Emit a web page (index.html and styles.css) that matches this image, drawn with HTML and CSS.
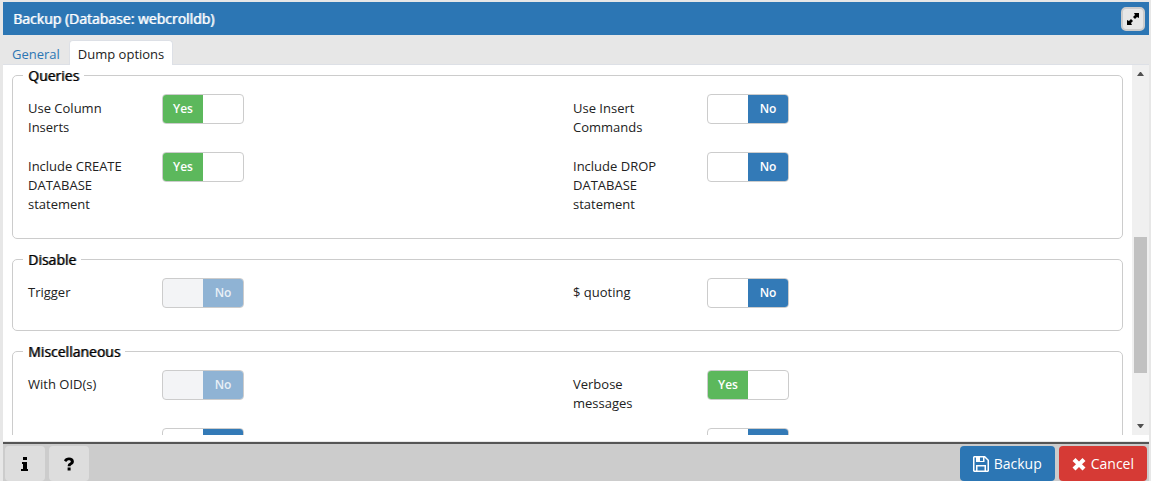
FILE: index.html
```
<!DOCTYPE html>
<html lang="en">
<head>
    <meta charset="UTF-8">
    <meta name="viewport" content="width=device-width, initial-scale=1.0">
    <title>Backup (Database: webcrolldb)</title>
    <link rel="stylesheet" href="styles.css">
</head>
<body>
    <div class="dialog">
        <header class="dialog-header">
            <h1>Backup (Database: webcrolldb)</h1>
            <button type="button" class="maximize" aria-label="Maximize">
                <svg viewBox="0 0 14 14" width="14" height="14"><path d="M8 1h5v5l-2-1-2 2-2-2 2-2zM6 13H1V8l2 1 2-2 2 2-2 2z"/></svg>
            </button>
        </header>
        <nav class="tabs">
            <a href="#general" class="tab">General</a>
            <a href="#dump" class="tab active">Dump options</a>
        </nav>
        <div class="content">
            <form class="options" id="dump">
                <fieldset>
                    <legend>Queries</legend>
                    <div class="row">
                        <div class="field">
                            <label for="columnInserts">Use Column Inserts</label>
                            <span class="toggle"><input type="checkbox" id="columnInserts" checked><span class="on">Yes</span><span class="off">No</span></span>
                        </div>
                        <div class="field">
                            <label for="insertCommands">Use Insert Commands</label>
                            <span class="toggle"><input type="checkbox" id="insertCommands"><span class="on">Yes</span><span class="off">No</span></span>
                        </div>
                    </div>
                    <div class="row">
                        <div class="field">
                            <label for="createDatabase">Include CREATE DATABASE statement</label>
                            <span class="toggle"><input type="checkbox" id="createDatabase" checked><span class="on">Yes</span><span class="off">No</span></span>
                        </div>
                        <div class="field">
                            <label for="dropDatabase">Include DROP DATABASE statement</label>
                            <span class="toggle"><input type="checkbox" id="dropDatabase"><span class="on">Yes</span><span class="off">No</span></span>
                        </div>
                    </div>
                </fieldset>
                <fieldset>
                    <legend>Disable</legend>
                    <div class="row">
                        <div class="field">
                            <label for="trigger">Trigger</label>
                            <span class="toggle"><input type="checkbox" id="trigger" disabled><span class="on">Yes</span><span class="off">No</span></span>
                        </div>
                        <div class="field">
                            <label for="quoting">$ quoting</label>
                            <span class="toggle"><input type="checkbox" id="quoting"><span class="on">Yes</span><span class="off">No</span></span>
                        </div>
                    </div>
                </fieldset>
                <fieldset>
                    <legend>Miscellaneous</legend>
                    <div class="row">
                        <div class="field">
                            <label for="withOids">With OID(s)</label>
                            <span class="toggle"><input type="checkbox" id="withOids" disabled><span class="on">Yes</span><span class="off">No</span></span>
                        </div>
                        <div class="field">
                            <label for="verbose">Verbose messages</label>
                            <span class="toggle"><input type="checkbox" id="verbose" checked><span class="on">Yes</span><span class="off">No</span></span>
                        </div>
                    </div>
                    <div class="row">
                        <div class="field">
                            <label for="forceQuotes"></label>
                            <span class="toggle"><input type="checkbox" id="forceQuotes"><span class="on"></span><span class="off"></span></span>
                        </div>
                        <div class="field">
                            <label for="setSession"></label>
                            <span class="toggle"><input type="checkbox" id="setSession"><span class="on"></span><span class="off"></span></span>
                        </div>
                    </div>
                </fieldset>
            </form>
            <div class="scrollbar" aria-hidden="true">
                <svg viewBox="0 0 17 17" width="17" height="17"><path d="M5 11h7L9 7H8z"/></svg>
                <div class="track"><div class="thumb"></div></div>
                <svg viewBox="0 0 17 17" width="17" height="17"><path d="M5 6h7l-3 4H8z"/></svg>
            </div>
        </div>
        <footer class="dialog-footer">
            <button type="button" class="btn btn-icon" aria-label="Information">
                <svg viewBox="0 0 8 16" width="8" height="16"><path d="M2 1h4v3H2zM1 6h5v7h1v2H0v-2h2V8H1z"/></svg>
            </button>
            <button type="button" class="btn btn-icon" aria-label="Help">
                <svg viewBox="0 0 10 16" width="10" height="16"><path d="M0 4.4C1 2.4 2.700 1.500 5 1.500c2.800 0 4.900 1.600 4.900 3.900 0 1.700-.8 2.500-2.100 3.300-1 .6-1.200.8-1.200 1.600H3.700c0-1.800.5-2.600 1.900-3.400.9-.5 1.200-.8 1.200-1.400 0-.8-.8-1.300-1.900-1.300-1.200 0-1.900.5-2.700 1.700zM3.600 11.500h3v3h-3z"/></svg>
            </button>
            <span class="spacer"></span>
            <button type="button" class="btn btn-primary">
                <svg viewBox="0 0 16 16" width="16" height="16"><path fill-rule="evenodd" d="M1 0h11l4 4v11l-1 1H1l-1-1V1zM1.500 1.500v13H3V9h10v5.500h1.500v-10L11.500 1.500V6H3V1.500zM7 1.500V5h3V1.500zM4.500 10.500v4h7v-4z"/></svg>
                Backup
            </button>
            <button type="button" class="btn btn-danger">
                <svg viewBox="0 0 14 14" width="14" height="14"><path d="M3.500 1 7 4.500 10.500 1 13.500 4 10 7.200l3.500 3.300-3 3L7 10l-3.500 3.500-3-3L4 7.200.5 4z"/></svg>
                Cancel
            </button>
        </footer>
    </div>
</body>
</html>
```
FILE: styles.css
```
* {
    box-sizing: border-box;
}
body {
    font-family: "Open Sans", "Noto Sans", sans-serif;
    font-size: 13px;
    line-height: 19px;
    color: #222;
    margin: 0;
    background-color: #e7e7e7;
}
svg {
    display: block;
    fill: currentColor;
}
.dialog {
    display: flex;
    flex-direction: column;
    height: 100vh;
    padding: 2px 2px 0 3px;
}
.dialog-header {
    display: flex;
    align-items: center;
    justify-content: space-between;
    height: 33px;
    padding: 0 4px 0 10px;
    background-color: #2c76b4;
    color: #fff;
}
.dialog-header h1 {
    margin: 0;
    font-size: 14px;
    font-weight: 400;
    text-shadow: 1px 0 0 rgba(255, 255, 255, 0.7);
}
.maximize {
    display: flex;
    align-items: center;
    justify-content: center;
    width: 24px;
    height: 24px;
    padding: 0;
    border: 2px solid #ccc;
    border-radius: 5px;
    background-color: #e7e7e7;
    color: #000;
}
.tabs {
    display: flex;
    align-items: flex-end;
    height: 30px;
    border-bottom: 1px solid #dde0e6;
}
.tab {
    height: 25px;
    margin-bottom: -1px;
    padding: 4px 8px 0;
    border: 1px solid transparent;
    border-bottom: none;
    border-radius: 4px 4px 0 0;
    color: #2c76b4;
    text-decoration: none;
}
.tab.active {
    border-color: #dde0e6;
    background-color: #fff;
    color: #222;
}
.content {
    display: flex;
    flex: 1;
    min-height: 0;
    padding-bottom: 7px;
    background-color: #fff;
}
.options {
    flex: 1;
    overflow: hidden;
    padding: 1px 9px 0;
}
fieldset {
    margin: 0 0 11px;
    padding: 9px 4px 9px 15px;
    border: 1px solid #ccc;
    border-radius: 5px;
}
legend {
    margin-left: -5px;
    padding: 0 5px;
    font-size: 14px;
    color: #000;
    text-shadow: 1px 0 0 rgba(0, 0, 0, 0.6);
}
.row {
    display: grid;
    grid-template-columns: 1fr 1fr;
    margin-bottom: 13px;
}
.field {
    display: flex;
    align-items: flex-start;
}
.field label {
    width: 134px;
    padding: 5px 30px 2px 0;
}
.toggle {
    position: relative;
    display: flex;
    width: 82px;
    height: 30px;
    border: 1px solid #ccc;
    border-radius: 4px;
    overflow: hidden;
    font-size: 12px;
    font-weight: 600;
    line-height: 28px;
    text-align: center;
    color: #fff;
}
/* the checkbox covers the whole switch so it takes the clicks */
.toggle input {
    position: absolute;
    inset: 0;
    width: 100%;
    height: 100%;
    margin: 0;
    opacity: 0;
    cursor: pointer;
}
.on {
    width: 50%;
    background-color: #5cb85c;
}
.off {
    width: 50%;
    margin-left: auto;
    background-color: #337ab7;
}
.toggle input:checked ~ .off,
.toggle input:not(:checked) ~ .on {
    display: none;
}
.toggle:has(input:disabled) {
    background-color: #f3f4f6;
}
.toggle input:disabled ~ .off {
    background-color: #8fb3d4;
    color: #e9f0f6;
}
.scrollbar {
    display: flex;
    flex-direction: column;
    width: 17px;
    background-color: #f0f0f0;
    color: #505050;
}
.track {
    flex: 1;
    display: flex;
    flex-direction: column;
    padding: 0 2px;
}
.track::before {
    content: "";
    flex: 155;
}
.track::after {
    content: "";
    flex: 45;
}
.thumb {
    flex: 135;
    background-color: #c1c1c1;
}
.dialog-footer {
    display: flex;
    gap: 4px;
    height: 39px;
    padding: 2px 2px 0;
    border-top: 2px solid #555;
    outline: 1px solid #e7e7e7;
    background-color: #ccc;
}
.spacer {
    flex: 1;
}
.btn {
    display: flex;
    align-items: center;
    justify-content: center;
    gap: 5px;
    height: 35px;
    padding: 0 13px;
    border: none;
    border-radius: 4px;
    font: inherit;
    font-size: 14px;
    color: #fff;
    cursor: pointer;
}
.btn-icon {
    width: 40px;
    background-color: #ddd;
    color: #000;
}
.btn-primary {
    background-color: #2c76b4;
}
.btn-danger {
    background-color: #d63a35;
}
```
